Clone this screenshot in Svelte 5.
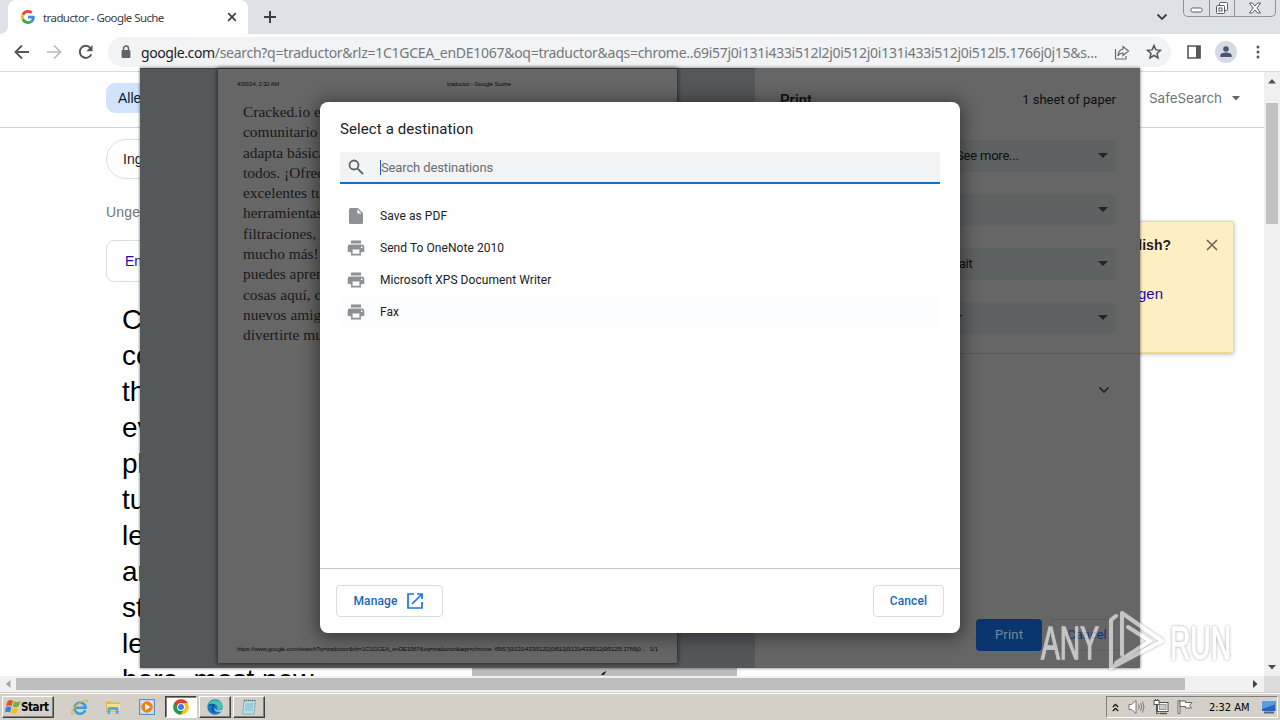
<script>
  const printers = [
    { name: 'Save as PDF', kind: 'file' },
    { name: 'Send To OneNote 2010', kind: 'printer' },
    { name: 'Microsoft XPS Document Writer', kind: 'printer' },
    { name: 'Fax', kind: 'printer', hover: true }
  ];
  const preview = [
    'Cracked.io es un foro', 'comunitario que se', 'adapta básicamente a', 'todos. ¡Ofrecemos',
    'excelentes tutoriales,', 'herramientas,', 'filtraciones, y', 'mucho más! Tú', 'puedes aprender',
    'cosas aquí, conocer', 'nuevos amigos y', 'divertirte mucho.'
  ];
  const result = [
    'Cracked.io', 'community', 'that', 'everyone', 'place', 'tutorials', 'leaks', 'and', 'stuff', 'learn', 'here, most new'
  ];
  const selects = ['See more...', '', 'Portrait', 'Color'];
</script>

<div class="screen">
  <header class="tabs">
    <div class="edge"></div>
    <div class="tab">
      <svg class="g" width="14" height="14" viewBox="0 0 48 48"><path fill="#EA4335" d="M24 9.5c3.5 0 6.700 1.200 9.200 3.600l6.850-6.850C35.900 2.400 30.500 0 24 0 14.600 0 6.500 5.400 2.600 13.200l8 6.200C12.400 13.700 17.700 9.500 24 9.500z"/><path fill="#4285F4" d="M47 24.550c0-1.600-.15-3.100-.4-4.550H24v9h12.900c-.6 3-2.250 5.500-4.800 7.200l7.700 6C44.400 38 47 31.800 47 24.550z"/><path fill="#FBBC05" d="M10.500 28.600a14.500 14.500 0 0 1 0-9.200l-8-6.200a24 24 0 0 0 0 21.600z"/><path fill="#34A853" d="M24 48c6.500 0 11.900-2.100 15.900-5.800l-7.700-6c-2.200 1.450-5 2.300-8.200 2.300-6.300 0-11.600-4.200-13.500-9.900l-8 6.200C6.500 42.600 14.600 48 24 48z"/></svg>
      <span class="title">traductor - Google Suche</span>
      <svg width="10" height="10" viewBox="0 0 10 10"><path d="M1.200 1.200l7.600 7.600M8.800 1.200L1.200 8.800" stroke="#3c4043" stroke-width="1.700"/></svg>
    </div>
    <svg class="plus" width="14" height="14" viewBox="0 0 14 14"><path d="M7 1v12M1 7h12" stroke="#3c4043" stroke-width="2"/></svg>
    <div class="grow"></div>
    <svg class="down" width="12" height="8" viewBox="0 0 12 8"><path d="M1.500 1.500L6 6l4.500-4.500" fill="none" stroke="#3c4043" stroke-width="1.800"/></svg>
    <div class="wincontrols">
      <span class="w1"><svg width="14" height="6" viewBox="0 0 14 6"><rect x="1" y="1" width="11" height="4" rx="1.500" fill="#fff" stroke="#555b66"/></svg></span>
      <span class="w2"><svg width="14" height="14" viewBox="0 0 14 14" fill="#fff" stroke="#555b66"><rect x="4.500" y="1.500" width="8" height="8" rx="1"/><rect x="1.500" y="4.500" width="8" height="8" rx="1"/><rect x="4" y="7" width="3" height="3"/></svg></span>
      <span class="w3"><svg width="14" height="12" viewBox="0 0 14 12"><path d="M1.500 1h3L7 4l2.500-3h3L9 6l3.500 5h-3L7 8l-2.500 3h-3L5 6z" fill="#fff" stroke="#555b66"/></svg></span>
    </div>
  </header>

  <div class="toolbar">
    <svg class="back" width="16" height="16" viewBox="0 0 16 16"><path d="M15 8H2M8 1.500L1.500 8 8 14.500" fill="none" stroke="#54585d" stroke-width="1.900"/></svg>
    <svg class="fwd" width="16" height="16" viewBox="0 0 16 16"><path d="M1 8h13M8 1.500L14.500 8 8 14.500" fill="none" stroke="#b8babd" stroke-width="1.700"/></svg>
    <svg class="reload" width="16" height="16" viewBox="0 0 16 16"><path d="M13.300 10.300A6 6 0 1 1 12.400 4" fill="none" stroke="#54585d" stroke-width="2"/><path d="M14.500 1v6.200H8.300z" fill="#54585d"/></svg>
    <div class="omnibox">
      <svg width="10" height="14" viewBox="0 0 10 14"><path d="M2.500 6V3.500a2.500 2.500 0 0 1 5 0V6" fill="none" stroke="#5f6368" stroke-width="1.500"/><rect x=".6" y="5" width="8.800" height="8" rx="1" fill="#5f6368"/></svg>
      <span class="url"><b>google.com</b>/search?q=traductor&amp;rlz=1C1GCEA_enDE1067&amp;oq=traductor&amp;aqs=chrome..69i57j0i131i433i512l2j0i512j0i131i433i512j0i512l5.1766j0j15&amp;s...</span>
      <svg class="share" width="16" height="15" viewBox="0 0 16 15" fill="none" stroke="#6a6e73" stroke-width="1.200"><path d="M1.500 4v10h10.500v-3"/><path d="M9 1.500L14.500 6 9 10.500V8C6.500 8 5 9 3.800 11 4.200 7.500 6 4.600 9 4.200z"/></svg>
      <svg class="star" width="16" height="16" viewBox="0 0 16 16"><path d="M8 1.600l1.900 4.300 4.600.4-3.500 3.100 1.100 4.600L8 11.500 3.900 14 5 9.400 1.500 6.300l4.600-.4z" fill="none" stroke="#54585d" stroke-width="1.500"/></svg>
    </div>
    <svg class="panel" width="14" height="14" viewBox="0 0 14 14"><path d="M1 1h12v12H1z" fill="none" stroke="#54585d" stroke-width="1.600"/><path d="M9 1h4.500v12H9z" fill="#54585d"/></svg>
    <span class="avatar"><svg width="14" height="14" viewBox="0 0 14 14" fill="#4a5575"><circle cx="7" cy="4" r="2.800"/><path d="M1.300 12v-1.500C1.300 8.500 5 7.600 7 7.600s5.700.9 5.700 2.900V12z"/></svg></span>
    <svg class="dots" width="4" height="14" viewBox="0 0 4 14" fill="#54585d"><circle cx="2" cy="2" r="1.500"/><circle cx="2" cy="7" r="1.500"/><circle cx="2" cy="12" r="1.500"/></svg>
  </div>

  <main class="web">
    <section class="doc">
      <nav class="nav">
        <span class="alle">Alle</span>
        <span class="grow"></span>
        <span class="safe">SafeSearch</span>
        <svg class="caret" width="8" height="5" viewBox="0 0 8 5"><path d="M0 0h8L4 4.500z" fill="#5f6368"/></svg>
      </nav>
      <div class="body">
        <div class="col">
          <span class="chip">Inglés</span>
          <span class="count">Ungefähr</span>
          <span class="lang">Englisch</span>
          <div class="result">
            {#each result as line}<div>{line}</div>{/each}
          </div>
        </div>
        <aside class="note">
          <div class="noterow"><b>English?</b><svg width="12" height="12" viewBox="0 0 12 12"><path d="M1 1l10 10M11 1L1 11" stroke="#6b6552" stroke-width="1.600"/></svg></div>
          <span class="notelink">anzeigen</span>
        </aside>
      </div>
      <div class="greybox"><svg width="6" height="4" viewBox="0 0 6 4"><path d="M0 4l2-2.500L5.500 0 3 4z" fill="#222"/></svg></div>
    </section>
    <div class="vscroll">
      <svg width="8" height="5" viewBox="0 0 8 5"><path d="M0 4.500h8L4 0z" fill="#505050"/></svg>
      <div class="vthumb"></div>
      <div class="grow"></div>
      <svg width="8" height="5" viewBox="0 0 8 5"><path d="M0 0h8L4 4.500z" fill="#505050"/></svg>
    </div>
  </main>
  <div class="hscroll">
    <svg class="ha" width="5" height="8" viewBox="0 0 5 8"><path d="M4.500 0v8L0 4z" fill="#a3a3a3"/></svg>
    <div class="hthumb"></div>
    <div class="grow"></div>
    <svg class="hb" width="5" height="8" viewBox="0 0 5 8"><path d="M0 0v8l4.500-4z" fill="#404040"/></svg>
    <div class="corner"></div>
  </div>

  <footer class="taskbar">
    <div class="btn start">
      <svg width="16" height="16" viewBox="0 0 16 16"><path d="M2.500 2.300Q5-.2 8 1.800L6.700 7.200Q4 5.600 1 7.500z" fill="#e8532a"/><path d="M9 2.300q3 1.800 6.300-.3l-1.500 5.300q-3 2-6 .3z" fill="#74b62c"/><path d="M.8 8.500q3-1.800 5.600-.2L5 13.500q-2.600-1.600-5 .2z" fill="#3c7fd0"/><path d="M7.500 9q3 1.500 6-.2l-1.500 5.300q-3 1.800-6 .2z" fill="#f5bd22"/></svg>
      <b>Start</b>
    </div>
    <svg class="ie" width="18" height="17" viewBox="0 0 18 17"><path d="M14.300 11.300A5.600 5.600 0 1 1 14.700 8.800H4" fill="none" stroke="#3f9bd8" stroke-width="2.600"/><path d="M2.500 14.900C-1 16 .6 10.400 6.500 5.500 12 .9 17.500-.4 16.300 3.600" fill="none" stroke="#dfb63c" stroke-width="1.400"/></svg>
    <svg class="folder" width="16" height="16" viewBox="0 0 16 16"><path d="M1 2.500h5l1 1h7.500V13H1z" fill="#e0b850"/><path d="M2 5h13v7H2z" fill="#f5e08c"/><path d="M2.500 15V9.500q0-1.500 1.500-1.500h8q1.500 0 1.500 1.500V15h-2.700v-4H5.200v4z" fill="#5ba9da"/></svg>
    <svg class="wmp" width="16" height="16" viewBox="0 0 16 16"><rect x=".5" y=".5" width="15" height="15" fill="#b8d7f2" stroke="#5b92c6"/><rect x="2.500" y="2.500" width="11" height="11" fill="#e5f1fb"/><circle cx="8" cy="8" r="5.800" fill="#f08018"/><path d="M6.200 4.800v6.400L11.300 8z" fill="#fff"/></svg>
    <div class="btn app on">
      <svg width="16" height="16" viewBox="0 0 16 16"><circle cx="8" cy="8" r="7.800" fill="#fbc116"/><path d="M1.250 4.100A7.800 7.800 0 0 0 7.600 15.800L11.400 9.900 8 8z" fill="#229a48"/><path d="M1.250 4.100A7.800 7.800 0 0 1 14.750 4.100H8L5 10z" fill="#e33b2e"/><circle cx="8" cy="8" r="3.900" fill="#fff"/><circle cx="8" cy="8" r="3" fill="#3b7de8"/></svg>
    </div>
    <div class="btn app">
      <svg width="16" height="16" viewBox="0 0 16 16"><circle cx="8" cy="8" r="7.700" fill="#1979cc"/><path d="M.8 6.500A7.700 7.700 0 0 1 15.700 7.500c0 2.500-2.200 3.500-4.200 3.300-1.500-.2-1.900-.8-1.300-1.600C11.500 5.500 5 3.500.8 6.500z" fill="#45c6a5"/><path d="M.8 6.500C4 3.800 8.500 4.700 8.500 7 6 7.500 5.500 12 9 14.200 3.500 13.500 4 8 6 6.500z" fill="#1055a0"/><path d="M8.300 7.500c-1.400 2.200 1 5 5.500 3.500l1.600-.4-1 1.900q-5.500 1.300-6.900-2z" fill="#d4d0c8"/></svg>
    </div>
    <div class="btn app">
      <svg width="16" height="16" viewBox="0 0 16 16"><path d="M3 1.500h11.500L13 15H1.500z" fill="#b8e0e8" stroke="#72a7b5" stroke-width=".8"/><path d="M4.500 5h8M4.200 7h8M4 9h8M3.700 11h8" stroke="#6fb2c4" stroke-width=".8"/><path d="M3 1.500h11.500" stroke="#667" stroke-width="1.600" stroke-dasharray="1 1"/></svg>
    </div>
    <div class="grow"></div>
    <div class="tray">
      <svg width="7" height="9" viewBox="0 0 7 9"><path d="M.8 4L3.500 1.300 6.200 4M.8 8l2.700-2.700L6.200 8" fill="none" stroke="#111" stroke-width="1.300"/></svg>
      <svg class="spk" width="17" height="16" viewBox="0 0 17 16"><path d="M1 5.500h2.500L8 1.500v13L3.500 10.500H1z" fill="#fff" stroke="#777"/><path d="M10.500 5.500q1.500 2.500 0 5M12.500 4q2.500 4 0 8M14.500 2.500q3 5.500 0 11" fill="none" stroke="#777"/></svg>
      <svg class="net" width="16" height="16" viewBox="0 0 16 16"><rect x="4.500" y="3.500" width="10.500" height="9" fill="#fff" stroke="#555"/><rect x="6.500" y="5.500" width="6.500" height="5" fill="#c8c8c8" stroke="#999"/><path d="M7 14.500h7" stroke="#555" stroke-width="1.500"/><rect x="1" y="1.500" width="5" height="4" fill="#fff" stroke="#555"/><path d="M3.500 5.500v9h3M2.500 0v2M4.500 0v2" fill="none" stroke="#555"/></svg>
      <svg class="flag" width="17" height="16" viewBox="0 0 17 16"><path d="M1 1.500h2v13H1z" fill="#fff" stroke="#666"/><path d="M3 2h5.500v1.500H15L12.500 6.500 14.500 9H8.500V7.500H3z" fill="#fff" stroke="#666"/></svg>
      <span class="clock">2:32 AM</span>
      <svg width="16" height="14" viewBox="0 0 16 14"><rect x=".5" y=".5" width="14.500" height="11" fill="#2a63bd" stroke="#c8d4e6"/><path d="M1 1h14v3L1 9z" fill="#5a9be6"/><path d="M3 12.500h10" stroke="#536580" stroke-width="2"/></svg>
    </div>
  </footer>

  <div class="print">
    <div class="left">
      <div class="sheet">
        <div class="shead"><span class="date">4/30/24, 2:32 AM</span><span class="mid">traductor - Google Suche</span></div>
        <div class="stext">{#each preview as line}<div>{line}</div>{/each}</div>
        <div class="sfoot"><span class="furl">https://www.google.com/search?q=traductor&amp;rlz=1C1GCEA_enDE1067&amp;oq=traductor&amp;aqs=chrome..69i57j0i131i433i512l2j0i512j0i131i433i512j0i512l5.1766j0...</span><span>1/1</span></div>
      </div>
    </div>
    <div class="right">
      <div class="rhead"><b>Print</b><span>1 sheet of paper</span></div>
      {#each selects as s, i}
        <div class="select"><span class="s{i}">{s}</span><svg width="10" height="5" viewBox="0 0 10 5"><path d="M0 0h10L5 5z" fill="#222527"/></svg></div>
      {/each}
      <div class="more"><svg width="12" height="8" viewBox="0 0 12 8"><path d="M1.500 1.500L6 6l4.500-4.500" fill="none" stroke="#222527" stroke-width="1.700"/></svg></div>
      <div class="actions"><span class="pbtn">Print</span><span class="cbtn">Cancel</span></div>
    </div>

    <div class="modal">
      <h1>Select a destination</h1>
      <div class="search">
        <svg width="16" height="16" viewBox="0 0 16 16" fill="none" stroke="#5f6368" stroke-width="1.800"><circle cx="6" cy="6" r="4.500"/><path d="M9.300 9.300L15 15"/></svg>
        <i class="cursor"></i><span>Search destinations</span>
      </div>
      <ul>
        {#each printers as p}
          <li class:hover={p.hover}>
            {#if p.kind === 'file'}
              <svg width="18" height="18" viewBox="0 0 18 18"><path d="M3.500 1h7.300L16 6v9.500q0 1.500-1.500 1.500h-11Q2 17 2 15.500v-13Q2 1 3.500 1z" fill="#8d9195"/><path d="M10.300 2.300V6.500H14.600z" fill="#fff"/></svg>
            {:else}
              <svg width="18" height="18" viewBox="0 0 18 18" fill="#8d9195"><path d="M4 1.500h10v3H4z"/><path fill-rule="evenodd" d="M3 5.500h12q2.300 0 2.300 2.300V13H14v3.500H4V13H.7V7.800Q.7 5.500 3 5.500zM5.600 10.500v4.300h6.800v-4.300zM14.700 7.300a.9.900 0 1 0 0 1.800.9.900 0 0 0 0-1.800z"/></svg>
            {/if}
            <span>{p.name}</span>
          </li>
        {/each}
      </ul>
      <div class="foot">
        <span class="obtn manage">Manage<svg width="16" height="16" viewBox="0 0 16 16" fill="none" stroke="#1a73e8" stroke-width="1.700"><path d="M7 1H1v14h14V9M10 1h5v5M15 1L5 11"/></svg></span>
        <span class="obtn cancel">Cancel</span>
      </div>
    </div>
  </div>

  <svg class="mark" width="200" height="66" viewBox="0 0 200 66">
    <g opacity=".62" filter="drop-shadow(0 0 1.500px #777)">
      <g fill="#fff" stroke="#fff" stroke-width="1.300">
        <text x="4" y="51" textLength="58" lengthAdjust="spacingAndGlyphs">ANY</text>
        <text x="133" y="51" textLength="61" lengthAdjust="spacingAndGlyphs">RUN</text>
      </g>
      <g fill="none" stroke="#fff" stroke-width="4" stroke-linejoin="round" stroke-linecap="round"><path d="M85 47V5L125 33 74 60V12L79 8"/><path d="M91 19l22 14L79 55"/></g>
    </g>
  </svg>
</div>

<style>
  :global(body) { margin: 0; overflow: hidden; }
  .screen { width: 1280px; height: 720px; position: relative; overflow: hidden; display: flex; flex-direction: column; background: #fff; font-family: "Liberation Sans", Arial, sans-serif; }
  .screen * { box-sizing: border-box; }
  svg { display: block; flex: none; }
  span, b, .screen div { white-space: nowrap; }
  .grow { flex: 1; }

  .tabs { height: 34px; flex: none; background: #dee1e6; display: flex; align-items: center; }
  .edge { width: 8px; align-self: stretch; background: #fff; position: relative; }
  .edge::after { content: ''; position: absolute; inset: 0; background: #dee1e6; border-bottom-right-radius: 8px; }
  .tab { width: 240px; height: 34px; background: #fff; border-radius: 8px 8px 0 0; display: flex; align-items: center; padding: 0 11px 0 13px; }
  .title { flex: 1; margin-left: 8px; font: 11.500px "Noto Sans", sans-serif; letter-spacing: -.58px; color: #3c4043; }
  .plus { margin-left: 15px; }
  .down { margin-right: 15px; }
  .wincontrols { width: 93px; height: 17px; align-self: flex-start; margin-right: 4px; display: flex; border: 1px solid #8d929c; border-top: 0; border-radius: 0 0 5px 5px; }
  .wincontrols span { display: flex; justify-content: center; align-items: center; border-right: 1px solid #8d929c; }
  .w1 { width: 26px; padding-top: 3px; } .w2 { width: 25px; } .wincontrols .w3 { flex: 1; border: 0; }

  .toolbar { height: 38px; flex: none; border-bottom: 1px solid #dadce0; display: flex; align-items: center; padding: 0 0 1px 14px; }
  .fwd { margin-left: 16px; } .reload { margin-left: 16px; }
  .omnibox { width: 1063px; height: 30px; border-radius: 15px; background: #f1f3f4; margin-left: 14px; padding-left: 13px; display: flex; align-items: center; }
  .url { margin-left: 10px; width: 966px; font: 14px "Noto Sans", sans-serif; letter-spacing: -.278px; color: #74787d; }
  .url b { font-weight: 400; color: #202124; letter-spacing: -.4px; }
  .share { margin-left: 7px; } .star { margin-left: 16px; }
  .panel { margin-left: 16px; }
  .avatar { margin-left: 14px; width: 22px; height: 22px; border-radius: 50%; background: #d6dbe3; display: flex; align-items: center; justify-content: center; }
  .dots { margin-left: 19px; }

  .web { height: 604px; flex: none; display: flex; }
  .doc { width: 1264px; height: 604px; overflow: hidden; position: relative; }
  .nav { height: 56px; border-bottom: 1px solid #d0d2d5; display: flex; align-items: center; padding: 0 20px 4px 106px; }
  .alle { width: 60px; height: 30px; background: #d3e3fd; border-radius: 9px; padding: 0 12px; font-size: 14px; line-height: 30px; color: #001d35; }
  .safe { font: 13.500px Inter, sans-serif; letter-spacing: -.05px; color: #70757a; }
  .caret { margin: 1px 4px 0 10px; }
  .body { display: flex; justify-content: space-between; padding: 11px 30px 0 106px; }
  .col { display: flex; flex-direction: column; align-items: flex-start; }
  .chip { height: 40px; width: 90px; border: 1px solid #dadce0; border-radius: 20px; font-size: 14px; line-height: 39px; padding-left: 16px; color: #202124; }
  .count { font-size: 14px; line-height: 20px; margin-top: 23px; color: #70757a; letter-spacing: .2px; }
  .lang { height: 42px; width: 110px; margin-top: 18px; border: 1px solid #dadce0; border-radius: 8px; font-size: 14px; line-height: 41px; padding-left: 18px; color: #1a0dab; }
  .result { margin: 20px 0 0 16px; font-size: 28px; line-height: 36px; color: #000; }
  .note { width: 300px; height: 132px; margin-top: 82px; background: #feefc3; border: 1px solid #f2d98c; border-radius: 2px; box-shadow: 0 1px 4px rgba(0,0,0,.3); padding: 13px 15px 0 0; display: flex; flex-direction: column; }
  .noterow { display: flex; justify-content: flex-end; align-items: center; gap: 35px; height: 20px; font-size: 14px; color: #202124; }
  .notelink { align-self: flex-end; margin: 30px 55px 0 0; font-size: 15px; line-height: 18px; color: #1a0dab; }
  .greybox { position: absolute; left: 472px; bottom: 0; width: 265px; height: 9px; background: #bdbdbd; padding: 4px 0 0 129px; }
  .vscroll { width: 16px; background: #f1f1f1; display: flex; flex-direction: column; align-items: center; padding: 7px 0 6px; }
  .vthumb { width: 12px; height: 121px; margin-top: 19px; background: #c1c1c1; }
  .hscroll { height: 16px; flex: none; background: #f1f1f1; display: flex; align-items: center; }
  .ha { margin-left: 6px; } .hb { margin-right: 6px; }
  .hthumb { margin-left: 5px; width: 1169px; height: 12px; background: #bdbdbd; }
  .corner { width: 16px; height: 16px; background: #dcdcdc; }

  .taskbar { height: 28px; flex: none; background: #d4d0c8; box-shadow: inset 0 1px #d4d0c8, inset 0 2px #fff; display: flex; align-items: center; padding: 2px 2px 0; }
  .btn { border: 1px solid; border-color: #fff #404040 #404040 #fff; box-shadow: inset -1px -1px #808080; height: 22px; display: flex; align-items: center; }
  .start { width: 52px; padding-left: 2px; gap: 0; }
  .start b { font: bold 11.500px "DejaVu Sans Condensed", "DejaVu Sans", sans-serif; letter-spacing: -.4px; color: #000; }
  .ie { margin-left: 17px; } .folder { margin-left: 16px; } .wmp { margin: 0 8px 0 18px; }
  .app { width: 32px; margin-left: 2px; justify-content: center; }
  .app.on { background: #fff; border-color: #404040 #fff #fff #404040; box-shadow: inset 1px 1px #808080; }
  .tray { width: 172px; height: 22px; border: 1px solid; border-color: #808080 #fff #fff #808080; display: flex; align-items: center; padding-left: 5px; }
  .spk { margin-left: 9px; } .net { margin-left: 8px; } .flag { margin-left: 8px; }
  .clock { margin-left: 15px; width: 52px; font: 11px "DejaVu Sans Condensed", sans-serif; letter-spacing: -.02px; color: #000; }

  .print { position: absolute; left: 140px; top: 68px; width: 1000px; height: 600px; display: flex; background: #666; box-shadow: 0 0 3px rgba(0,0,0,.6); }
  .left { width: 615px; background: #54585b; padding: 1px 78px 5px; box-shadow: inset 0 1px #444; }
  .sheet { width: 459px; height: 594px; background: #666; box-shadow: 0 0 4px 1px rgba(20,20,20,.7); display: flex; flex-direction: column; }
  .shead { padding: 11px 0 0 19px; font-size: 6px; line-height: 8px; color: #0c0c0c; display: flex; }
  .date { width: 210px; letter-spacing: -.2px; }
  .mid { letter-spacing: -.13px; }
  .stext { margin: 14px 0 0 25px; font: 15.400px/20.280px "Liberation Serif", serif; color: #191919; }
  .sfoot { margin: auto 19px 10px 19px; font-size: 6px; line-height: 8px; color: #0c0c0c; display: flex; justify-content: space-between; }
  .furl { letter-spacing: -.127px; }
  .right { width: 385px; padding: 22px 24px 0 25px; font-family: Roboto, sans-serif; color: #0e0f10; display: flex; flex-direction: column; }
  .rhead { display: flex; justify-content: space-between; font-size: 13px; line-height: 20px; height: 50px; }
  .rhead b { font-size: 15px; font-weight: 500; }
  .select { height: 32px; margin: 0 0 22px 150px; background: #5f6262; display: flex; align-items: center; justify-content: space-between; padding: 0 8px 1px; border-radius: 3px; font-size: 13px; letter-spacing: -.2px; }
  .s0 { margin-left: 18px; } .s2 { margin-left: -7px; } .s3 { margin-left: -6px; }
  .more { margin: -3px -24px 0 -25px; border-top: 1px solid #595959; height: 72px; display: flex; align-items: center; justify-content: flex-end; padding-right: 30px; }
  .actions { margin: auto -8px 17px; display: flex; justify-content: flex-end; gap: 8px; font-size: 13px; line-height: 32px; text-align: center; }
  .pbtn { width: 66px; height: 32px; border-radius: 4px; background: #0a3670; color: #7c8795; letter-spacing: .2px; }
  .cbtn { width: 74px; height: 32px; border-radius: 4px; border: 1px solid #5c5c5c; color: #0a3670; line-height: 30px; }

  .modal { position: absolute; left: 180px; top: 34px; width: 640px; height: 531px; background: #fff; border-radius: 8px; box-shadow: 0 2px 18px 3px rgba(0,0,0,.45); font-family: Roboto, sans-serif; display: flex; flex-direction: column; }
  h1 { margin: 17px 20px 13px; font-size: 15px; font-weight: 400; line-height: 20px; letter-spacing: .1px; color: #202124; }
  .search { margin: 0 20px; height: 32px; background: #f1f3f4; border-bottom: 2px solid #1a6dd0; border-radius: 4px 4px 0 0; display: flex; align-items: center; padding-left: 8px; font-size: 13px; color: #6a6e73; letter-spacing: -.13px; }
  .cursor { width: 1px; height: 15px; margin: 1px 0 0 16px; background: #2a56c0; }
  ul { list-style: none; margin: 16px 20px 0; padding: 0; }
  li { height: 32px; display: flex; align-items: center; padding-left: 7px; gap: 15px; font-size: 12px; letter-spacing: .06px; color: #202124; }
  .hover { background: #fafcfe; }
  .foot { margin-top: auto; height: 65px; border-top: 1px solid #c4c6c8; display: flex; justify-content: space-between; padding: 16px; }
  .obtn { height: 32px; border: 1px solid #dadce0; border-radius: 4px; display: flex; align-items: center; justify-content: center; font-size: 12px; font-weight: 500; letter-spacing: .1px; color: #1967b8; }
  .manage { width: 107px; gap: 10px; padding-right: 2px; } .cancel { width: 71px; }
  .mark { position: absolute; left: 1037px; top: 608px; }
  .mark text { font: 46px "Liberation Sans", sans-serif; }
</style>
